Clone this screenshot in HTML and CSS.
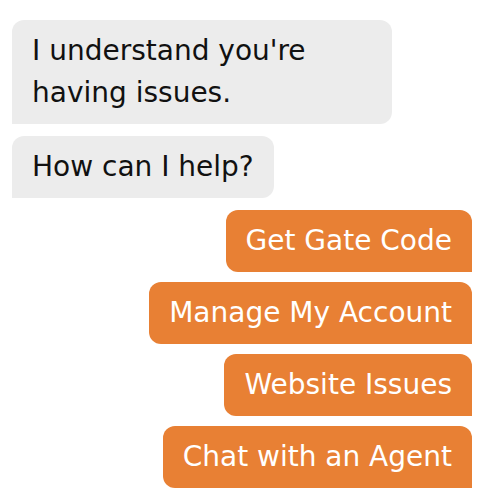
FILE: index.html
```html
<!DOCTYPE html>
<html lang="en">
<head>
<meta charset="utf-8">
<title>Chat</title>
<link rel="stylesheet" href="styles.css">
</head>
<body>
<div class="chat">
  <div class="msg">I understand you're having issues.</div>
  <div class="msg">How can I help?</div>
  <div class="options">
    <button class="opt">Get Gate Code</button>
    <button class="opt">Manage My Account</button>
    <button class="opt">Website Issues</button>
    <button class="opt">Chat with an Agent</button>
  </div>
</div>
</body>
</html>
```

FILE: styles.css
```css
html, body {
  margin: 0;
  padding: 0;
  background: #ffffff;
}
.chat {
  display: flex;
  flex-direction: column;
  gap: 12px;
  padding: 20px 14px 0 12px;
  font-family: "DejaVu Sans", "Liberation Sans", sans-serif;
  font-size: 28px;
  line-height: 42px;
}
.msg {
  align-self: flex-start;
  box-sizing: border-box;
  max-width: 380px;
  padding: 10px 20px;
  background: #ececec;
  color: #111111;
  border-radius: 12px 12px 12px 0;
}
.options {
  display: flex;
  flex-direction: column;
  align-items: flex-end;
  gap: 10px;
}
.opt {
  font: inherit;
  border: 0;
  margin: 0;
  padding: 10px 20px;
  background: #e88034;
  color: #ffffff;
  border-radius: 12px 12px 0 12px;
}
```
